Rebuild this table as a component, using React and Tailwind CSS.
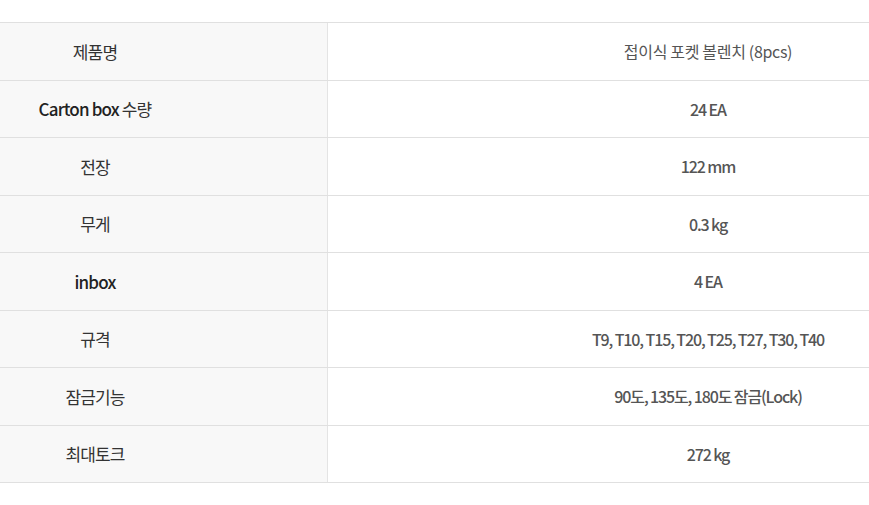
export default function App() {
  const rows = [
    [<span>제품명</span>, "접이식 포켓 볼렌치 (8pcs)", false],
    [
      <span>
        <span className="font-medium text-[#222]">Carton box</span> 수량
      </span>,
      "24 EA",
      true,
    ],
    [<span>전장</span>, "122 mm", true],
    [<span>무게</span>, "0.3 kg", true],
    [<span className="font-medium text-[#222]">inbox</span>, "4 EA", true],
    [<span>규격</span>, "T9, T10, T15, T20, T25, T27, T30, T40", true],
    [<span>잠금기능</span>, "90도, 135도, 180도 잠금(Lock)", true],
    [<span>최대토크</span>, "272 kg", true],
  ];
  return (
    <div
      className="w-[869px] h-[505px] bg-white pt-[22px]"
      style={{ fontFamily: '"Noto Sans CJK KR", "Noto Sans", sans-serif' }}
    >
      <div className="border-t border-[#e0e0e0]">
        {rows.map(([k, v, vb], i) => (
          <div key={i} className="flex h-[57.5px] border-b border-[#e0e0e0]">
            <div className="w-[328px] shrink-0 bg-[#f8f8f8] border-r border-[#e4e4e4] flex items-center justify-center pr-[137px] text-[17px] tracking-[-0.05em] whitespace-nowrap font-normal text-[#333]">
              {k}
            </div>
            <div
              className={
                "flex-1 flex items-center justify-center pl-[219px] text-[16px] text-[#555] whitespace-nowrap " +
                (vb ? "font-medium tracking-[-0.07em]" : "font-normal tracking-[-0.02em]")
              }
            >
              {v}
            </div>
          </div>
        ))}
      </div>
    </div>
  );
}
